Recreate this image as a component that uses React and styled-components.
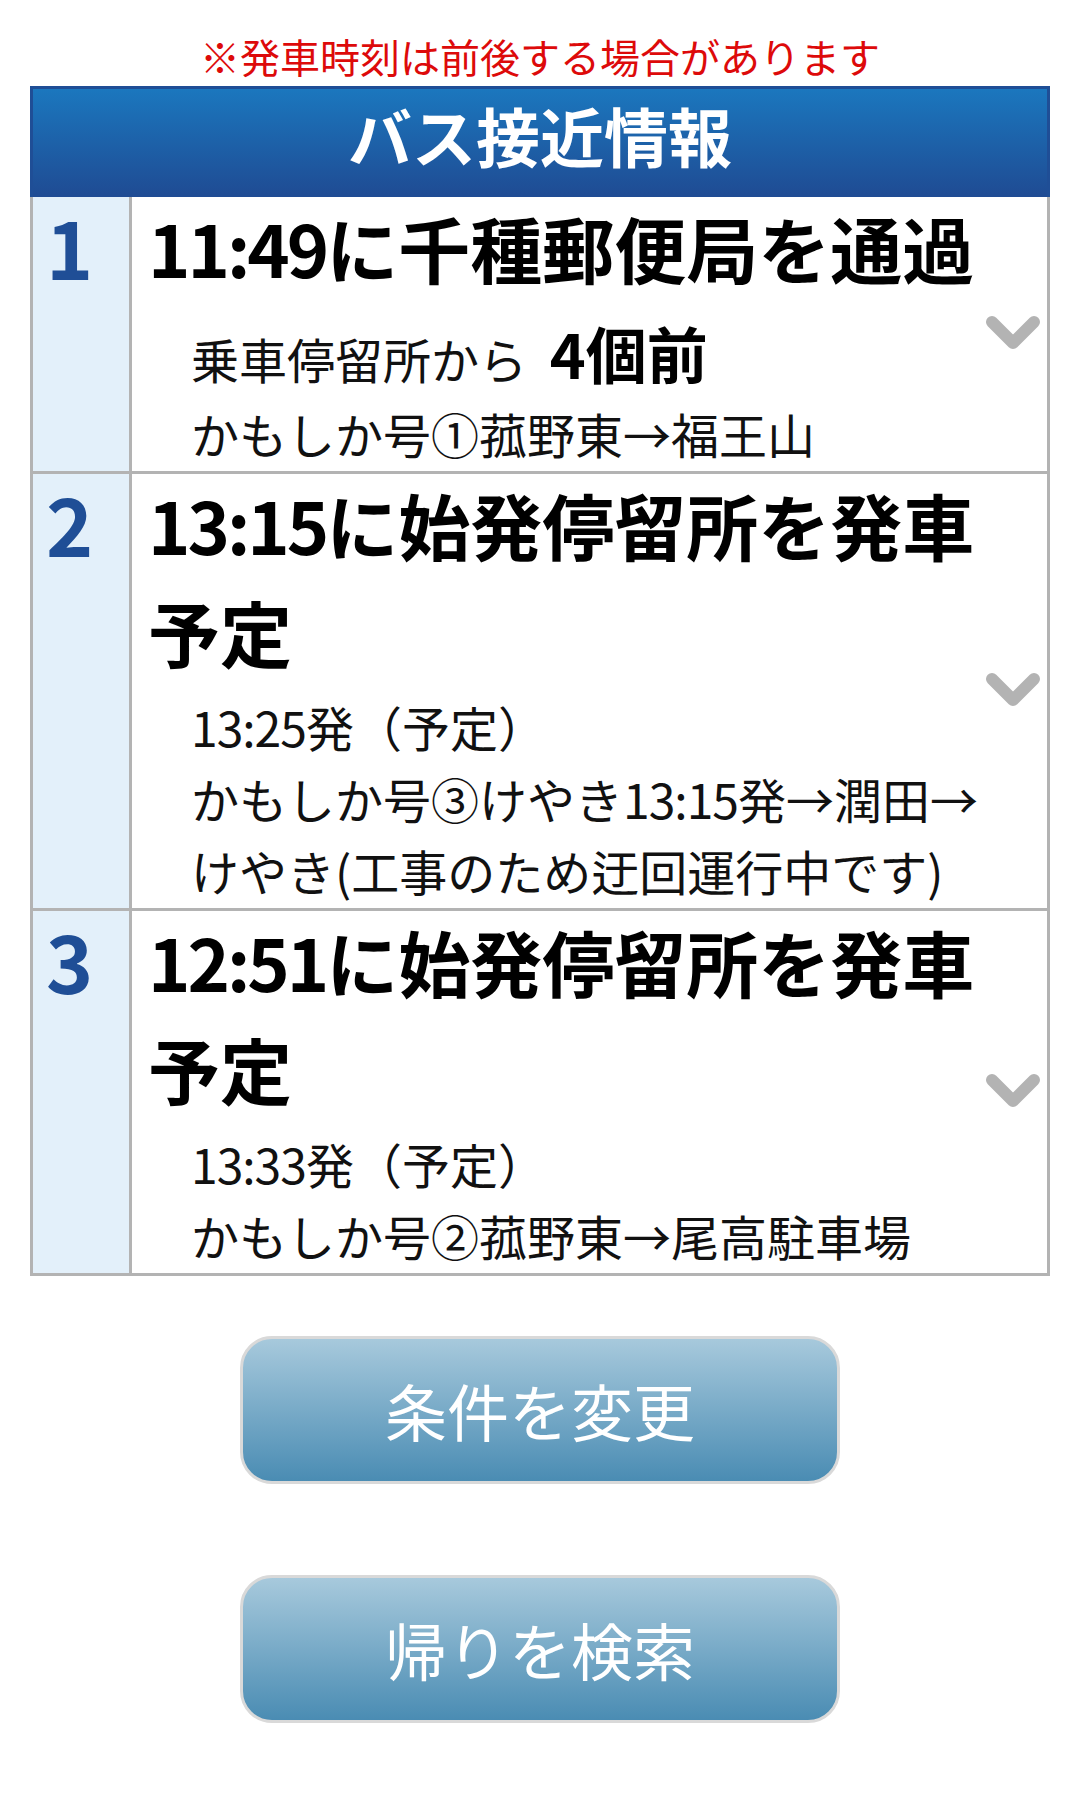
import React from 'react';
import styled, { createGlobalStyle } from 'styled-components';

const GlobalStyle = createGlobalStyle`
    body {
        margin: 0;
        background: #fff;
        font-family: "Noto Sans CJK JP", "Noto Sans", sans-serif;
    }
`;

const Page = styled.div`
    padding: 0 30px 80px;
`;

const Notice = styled.div`
    padding-top: 26px;
    text-align: center;
    color: #dd0a0a;
    font-size: 40px;
    line-height: 60px;
`;

const Header = styled.div`
    height: 108px;
    border: 3px solid #1f4e96;
    border-bottom: 0;
    background: linear-gradient(#1b77be, #1f4b93);
    color: #fff;
    text-align: center;
    font-size: 64px;
    font-weight: 700;
    line-height: 90px;
    box-sizing: content-box;
`;

const Table = styled.div`
    border-left: 3px solid #b3b3b3;
    border-right: 3px solid #b3b3b3;
`;

const Row = styled.div`
    display: flex;
    border-bottom: 3px solid #b3b3b3;
`;

const NumCell = styled.div`
    width: 83px;
    flex: none;
    padding-left: 13px;
    background: #e3f0fa;
    border-right: 3px solid #b3b3b3;
    color: #1f4e96;
    font-size: 80px;
    font-weight: 700;
    line-height: 96px;
`;

const Content = styled.div`
    flex: 1;
    min-width: 0;
    display: flex;
    padding: 0 4px 2px 16px;
`;

const TextBlock = styled.div`
    flex: 1;
    min-width: 0;
`;

const Main = styled.div`
    margin-top: -4px;
    color: #000;
    font-size: 72px;
    font-weight: 700;
    line-height: 107px;
`;

const Sub = styled.div`
    margin: 6px 0 0 43px;
    color: #111;
    font-size: 48px;
    line-height: 72px;
`;

const SubLine = styled.div`
    padding: ${p => (p.$tall ? '16px 0 3px' : '0')};
`;

const Big = styled.span`
    margin-left: 12px;
    color: #000;
    font-size: 61px;
    font-weight: 700;
    line-height: 1;
`;

const Time = styled.span`
    letter-spacing: ${p => p.$tight}px;
`;

const Toggle = styled.div`
    width: 60px;
    flex: none;
    display: flex;
    align-items: center;
    justify-content: center;
`;

const Buttons = styled.div`
    display: flex;
    flex-direction: column;
    align-items: center;
    gap: 91px;
    padding-top: 60px;
`;

const Button = styled.button`
    width: 600px;
    height: 148px;
    box-sizing: border-box;
    border: 3px solid #d9d9d9;
    border-radius: 32px;
    background: linear-gradient(#a7c9dc, #4a8cb3);
    color: #fff;
    font-family: "Noto Sans CJK JP", sans-serif;
    font-size: 62px;
    cursor: pointer;
`;

function Chevron() {
    return (
        <svg width="60" height="40" viewBox="0 0 60 40">
            <polyline points="9,9 30,30 51,9" fill="none" stroke="#b3b3b3" strokeWidth="12"
                strokeLinecap="round" strokeLinejoin="round" />
        </svg>
    );
}

const buses = [
    {
        no: 1,
        time: '11:49',
        title: 'に千種郵便局を通過',
        lines: [
            { tall: true, text: '乗車停留所から', big: '4個前' },
            { text: 'かもしか号①菰野東→福王山' },
        ],
    },
    {
        no: 2,
        time: '13:15',
        title: 'に始発停留所を発車予定',
        lines: [
            { time: '13:25', text: '発（予定）' },
            { text: 'かもしか号③けやき', time2: '13:15', rest: '発→潤田→けやき(工事のため迂回運行中です)' },
        ],
    },
    {
        no: 3,
        time: '12:51',
        title: 'に始発停留所を発車予定',
        lines: [
            { time: '13:33', text: '発（予定）' },
            { text: 'かもしか号②菰野東→尾高駐車場' },
        ],
    },
];

function BusRow({ bus }) {
    return (
        <Row>
            <NumCell>{bus.no}</NumCell>
            <Content>
                <TextBlock>
                    <Main><Time $tight={-3}>{bus.time}</Time>{bus.title}</Main>
                    <Sub>
                        {bus.lines.map((l, i) => (
                            <SubLine key={i} $tall={l.tall}>
                                {l.time && <Time $tight={-1}>{l.time}</Time>}
                                {l.text}
                                {l.time2 && <Time $tight={-1}>{l.time2}</Time>}
                                {l.rest}
                                {l.big && <> <Big>{l.big}</Big></>}
                            </SubLine>
                        ))}
                    </Sub>
                </TextBlock>
                <Toggle><Chevron /></Toggle>
            </Content>
        </Row>
    );
}

export default function App() {
    return (
        <Page>
            <GlobalStyle />
            <Notice>※発車時刻は前後する場合があります</Notice>
            <Header>バス接近情報</Header>
            <Table>
                {buses.map(b => <BusRow key={b.no} bus={b} />)}
            </Table>
            <Buttons>
                <Button>条件を変更</Button>
                <Button>帰りを検索</Button>
            </Buttons>
        </Page>
    );
}
